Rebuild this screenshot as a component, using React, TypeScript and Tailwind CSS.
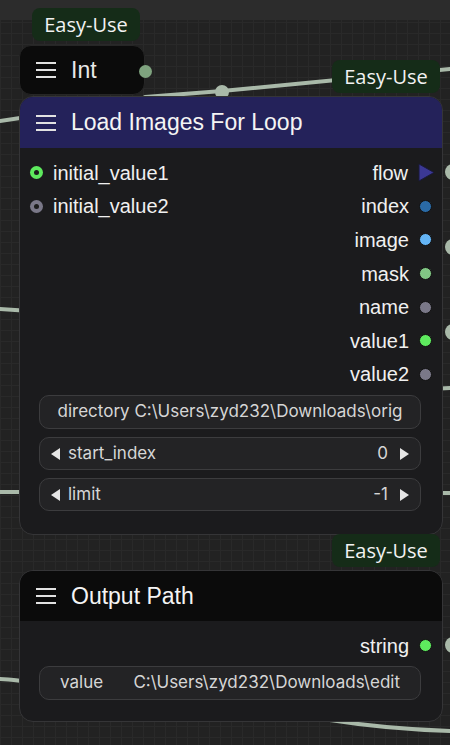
import React from "react"

const sans = { fontFamily: "Arial, 'Liberation Sans', sans-serif" }
const ui = { fontFamily: "Inter, 'Liberation Sans', sans-serif" }
const badgeFont = { fontFamily: "'Open Sans', 'Noto Sans', sans-serif" }

function Menu() {
  return (
    <div className="flex w-[20px] flex-col gap-[5px]">
      <span className="h-[2px] bg-[#e2e2e2]" />
      <span className="h-[2px] bg-[#e2e2e2]" />
      <span className="h-[2px] bg-[#e2e2e2]" />
    </div>
  )
}

function Badge({ className }: { className: string }) {
  return (
    <div
      className={`absolute flex h-[33px] w-[108px] items-center justify-center rounded-[8px] bg-[#152c18] text-[20px] text-[#f2f2f2] ${className}`}
      style={badgeFont}
    >
      Easy-Use
    </div>
  )
}

type Out = { name: string; color: string; flow?: boolean }

const outputs: Out[] = [
  { name: "flow", color: "#3b3894", flow: true },
  { name: "index", color: "#2a6aa6" },
  { name: "image", color: "#64b5f6" },
  { name: "mask", color: "#81c784" },
  { name: "name", color: "#7a7888" },
  { name: "value1", color: "#5eea5e" },
  { name: "value2", color: "#7a7888" },
]

function OutRow({ o }: { o: Out }) {
  return (
    <div className="flex h-[33.6px] items-center justify-end gap-[10px]">
      <span className="text-[20px] text-[#f0f0f0]">{o.name}</span>
      {o.flow ? (
        <svg width="17" height="19" viewBox="0 0 17 19" className="mr-[-3px]">
          <path d="M1 1 L16 9.5 L1 18 Z" fill={o.color} stroke="#1a1a3a" strokeWidth="1" />
        </svg>
      ) : (
        <span
          className="h-[13px] w-[13px] rounded-full border border-[#111]"
          style={{ backgroundColor: o.color }}
        />
      )}
    </div>
  )
}

function InRow({ name, color }: { name: string; color: string }) {
  return (
    <div className="flex h-[33.6px] items-center gap-[10px]">
      <span
        className="flex h-[13px] w-[13px] items-center justify-center rounded-full"
        style={{ backgroundColor: color }}
      >
        <span className="h-[5px] w-[5px] rounded-full bg-[#1c1c1c]" />
      </span>
      <span className="text-[20px] text-[#f0f0f0]">{name}</span>
    </div>
  )
}

function Arrow({ dir }: { dir: "l" | "r" }) {
  return (
    <svg width="9" height="12" viewBox="0 0 9 12">
      <path d={dir === "l" ? "M9 0 L0 6 L9 12 Z" : "M0 0 L9 6 L0 12 Z"} fill="#e6e6e6" />
    </svg>
  )
}

function NumberWidget({ label, value }: { label: string; value: string }) {
  return (
    <div className="flex h-[33px] items-center rounded-[10px] border border-[#3c3c3e] bg-[#232325] px-[11px] text-[17px] text-[#d6d6d6]">
      <Arrow dir="l" />
      <span className="ml-[8px] flex-1">{label}</span>
      <span>{value}</span>
      <span className="ml-[12px] flex">
        <Arrow dir="r" />
      </span>
    </div>
  )
}

export default function App() {
  return (
    <div
      className="relative h-[745px] w-[450px] overflow-hidden bg-[#222222] bg-[linear-gradient(to_right,#292929_1px,transparent_1px),linear-gradient(to_bottom,#292929_1px,transparent_1px)] bg-[size:11px_11px]"
      style={sans}
    >
      <div className="absolute left-0 right-0 top-0 h-[20px] bg-[#2c2c2c]" />

      {/* wires */}
      <svg className="absolute inset-0" width="450" height="745" viewBox="0 0 450 745">
        <g stroke="#a9b9a9" strokeWidth="4" fill="none" strokeLinecap="round">
          <path d="M0 121 L40 115" />
          <path d="M145 97 L222 91 L450 69" />
          <path d="M0 309 L30 311" />
          <path d="M0 492 L30 492" />
          <path d="M0 679 C10 679 20 681 30 682" />
          <path d="M430 389 L450 388" />
          <path d="M430 493 L450 493" />
          <path d="M330 720 C380 728 420 730 450 731" />
        </g>
        <g fill="#a9b9a9">
          <circle cx="222" cy="92" r="7" />
          <circle cx="453" cy="172" r="8" />
          <circle cx="453" cy="247" r="8" />
          <circle cx="453" cy="332" r="8" />
          <circle cx="453" cy="645" r="8" />
        </g>
      </svg>

      <Badge className="left-[32px] top-[8px]" />

      {/* Int node */}
      <div className="absolute left-[19px] top-[45px] flex h-[50px] w-[126px] items-center gap-[15px] rounded-[12px] border border-[#262626] bg-[#0b0b0b] pl-[16px]">
        <Menu />
        <span className="text-[23px] text-[#e8e8e8]">Int</span>
        <span className="absolute right-[-8px] top-[19px] h-[13px] w-[13px] rounded-full bg-[#7fa37f]" />
      </div>

      <Badge className="left-[332px] top-[60px]" />

      {/* Load Images For Loop */}
      <div className="absolute left-[19px] top-[96px] flex h-[439px] w-[424px] flex-col overflow-hidden rounded-[14px] border border-[#353537] bg-[#1b1b1d]">
        <div className="flex h-[51px] shrink-0 items-center gap-[15px] bg-[#24225a] pl-[16px]">
          <Menu />
          <span className="text-[23px] text-[#f4f4f4]">Load Images For Loop</span>
        </div>
        <div className="flex pt-[8px]">
          <div className="flex flex-1 flex-col pl-[10px]">
            <InRow name="initial_value1" color="#5eea5e" />
            <InRow name="initial_value2" color="#7a7888" />
          </div>
          <div className="flex flex-col pr-[10px]">
            {outputs.map((o) => (
              <OutRow key={o.name} o={o} />
            ))}
          </div>
        </div>
        <div className="ml-[19px] mr-[21px] mt-[4px] flex flex-col gap-[8px]" style={ui}>
          <div className="flex h-[34px] items-center justify-center rounded-[10px] border border-[#3c3c3e] bg-[#232325] text-[17px] text-[#d6d6d6]">
            directory C:\Users\zyd232\Downloads\orig
          </div>
          <NumberWidget label="start_index" value="0" />
          <NumberWidget label="limit" value="-1" />
        </div>
      </div>

      <Badge className="left-[332px] top-[534px]" />

      {/* Output Path */}
      <div className="absolute left-[19px] top-[570px] flex h-[152px] w-[424px] flex-col overflow-hidden rounded-[14px] border border-[#353537] bg-[#1b1b1d]">
        <div className="flex h-[50px] shrink-0 items-center gap-[15px] bg-[#0b0b0b] pl-[16px]">
          <Menu />
          <span className="text-[23px] text-[#f4f4f4]">Output Path</span>
        </div>
        <div className="flex flex-col pr-[10px] pt-[8px]">
          <OutRow o={{ name: "string", color: "#5eea5e" }} />
        </div>
        <div
          className="ml-[19px] mr-[21px] mt-[3px] flex h-[34px] items-center rounded-[10px] border border-[#3c3c3e] bg-[#232325] px-[20px] text-[17px] text-[#d6d6d6]"
          style={ui}
        >
          <span className="w-[78px]">value</span>
          <span>C:\Users\zyd232\Downloads\edit</span>
        </div>
      </div>
    </div>
  )
}
